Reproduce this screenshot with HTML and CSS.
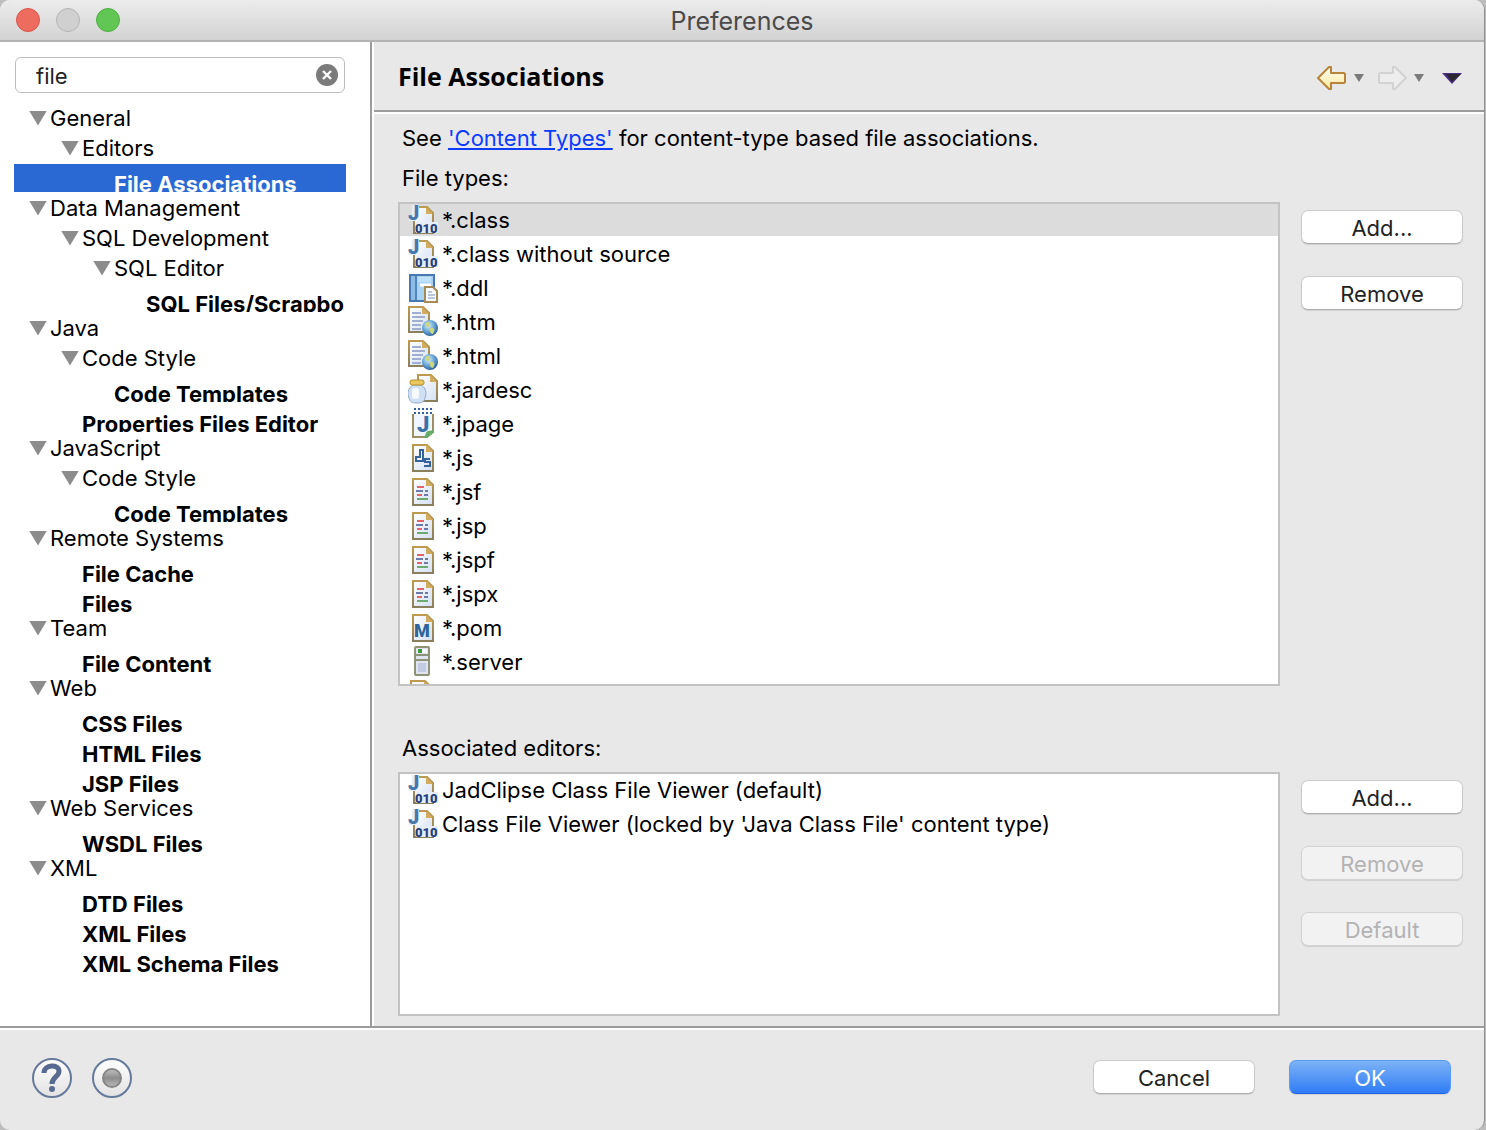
FILE: index.html
```html
<!DOCTYPE html>
<html lang="en">
<head>
<meta charset="utf-8">
<title>Preferences</title>
<link rel="stylesheet" href="styles.css">
</head>
<body>
<svg class="defs" aria-hidden="true">
  <defs>
    <linearGradient id="paper" x1="0" y1="0" x2="1" y2="1"><stop offset="0" stop-color="#fff"/><stop offset="1" stop-color="#d3e0f4"/></linearGradient>
    <linearGradient id="edge" x1="0" y1="0" x2="0" y2="1"><stop offset="0" stop-color="#bd9a50"/><stop offset="1" stop-color="#8a7f5c"/></linearGradient>
    <linearGradient id="gold" x1="0" y1="0" x2="0" y2="1"><stop offset="0" stop-color="#fffef2"/><stop offset="1" stop-color="#fbe9a0"/></linearGradient>
    <radialGradient id="globe" cx=".4" cy=".35" r=".7"><stop offset="0" stop-color="#d9f0fb"/><stop offset=".6" stop-color="#5b9bd0"/><stop offset="1" stop-color="#2c568f"/></radialGradient>
    <linearGradient id="dot" x1="0" y1="0" x2="0" y2="1"><stop offset="0" stop-color="#c4c4c4"/><stop offset=".5" stop-color="#8c8c8c"/><stop offset="1" stop-color="#bdbdbd"/></linearGradient>
    <linearGradient id="round" x1="0" y1="0" x2="0" y2="1"><stop offset="0" stop-color="#fff"/><stop offset="1" stop-color="#e2e2e2"/></linearGradient>
    <symbol id="page" viewBox="0 0 32 32"><path d="M5 3h14l6 6v20H5z" fill="url(#paper)" stroke="url(#edge)" stroke-width="2"/><path d="M18 3v7h7z" fill="#d2ac5e"/></symbol>
    <symbol id="class" viewBox="0 0 32 32">
      <path d="M6 3h13l6 6v20H6z" fill="url(#paper)" stroke="url(#edge)" stroke-width="2"/><path d="M18 3v7h7z" fill="#d2ac5e"/>
      <path d="M4 1h7v13l-3 3H1v-5h3z" fill="#e3edf8"/>
      <text x="0" y="16" class="glyph-j">J</text>
      <path d="M8 18h22v11H8z" fill="#e6edf9"/>
      <text x="7" y="29" class="glyph-bits">010</text>
    </symbol>
    <symbol id="ddl" viewBox="0 0 32 32">
      <path d="M2 3h24v26H2z" fill="#a9d3f5" stroke="#4879ae" stroke-width="2"/><path d="M3 4h4v24H3z" fill="#8dbbe6"/><path d="M8 4v24" stroke="#4f86bd" stroke-width="2"/><path d="M12 13h11" stroke="#fff" stroke-width="3"/><path d="M10 5h13v5H10z" fill="#bfe0fa"/>
      <path d="M17 15h8l4 4v11H17z" fill="#f7faff" stroke="#a58c52" stroke-width="2"/><path d="M20 20h4M20 23h7M20 26h7" stroke="#7b93bd"/>
    </symbol>
    <symbol id="html" viewBox="0 0 32 32">
      <path d="M1 1h14l6 6v19H1z" fill="url(#paper)" stroke="url(#edge)" stroke-width="2"/><path d="M14 1v7h7z" fill="#d2ac5e"/>
      <path d="M4 7h9M4 11h13M4 15h11M4 19h9M4 23h9" stroke="#a0aed0" stroke-width="2"/>
      <circle cx="22" cy="22" r="8" fill="url(#globe)"/><path d="M17 18c3-4 5-2 5 1s-4 2-5 0M22 22c4-1 6 1 3 6-2 0-4-3-3-6" fill="#cbd67e"/>
    </symbol>
    <symbol id="jar" viewBox="0 0 32 32">
      <path d="M10 1h13l6 6v20H10z" fill="url(#paper)" stroke="url(#edge)" stroke-width="2"/><path d="M22 1v7h7z" fill="#d2ac5e"/>
      <path d="M5 11h8c5 3 6 8 4 13-1 4-3 5-8 5s-7-1-8-5c-2-5-1-10 4-13z" fill="#cfdff4" stroke="#93a9ca"/><rect x="4" y="14" width="7" height="11" rx="3" fill="#f6faff"/><rect x="2" y="6" width="14" height="5" rx="2" fill="#e9c95d" stroke="#b58f2e"/>
    </symbol>
    <symbol id="jpage" viewBox="0 0 32 32">
      <path d="M5 3h20v21l-6 5H5z" fill="#f1f7ff" stroke="#9c8f63" stroke-width="2"/><path d="M26 22v2l-7 6h-4c3-2 2-6 5-7z" fill="#67ad68"/>
      <path d="M4 3h22" stroke="#fff" stroke-width="6"/><path d="M6 1h20M6 5h20" stroke="#355f93" stroke-width="2" stroke-dasharray="2 2"/>
      <text x="9" y="24" class="glyph-page">J</text>
    </symbol>
    <symbol id="js" viewBox="0 0 32 32"><use href="#page"/><path d="M12 8h3v11H8v-4h4zM22 17h-5v3h5v4h-6" fill="none" stroke="#35629a" stroke-width="2"/></symbol>
    <symbol id="jsp" viewBox="0 0 32 32"><use href="#page"/>
      <path d="M9 11h7M9 19h5" stroke="#e1646a" stroke-width="2"/><path d="M8 15h7M17 15h3M16 19h4" stroke="#6d7ba8" stroke-width="2"/><path d="M9 23h11" stroke="#6daa72" stroke-width="2"/>
    </symbol>
    <symbol id="pom" viewBox="0 0 32 32"><use href="#page"/><text x="6" y="25" class="glyph-m">M</text></symbol>
    <symbol id="server" viewBox="0 0 32 32">
      <rect x="7" y="1" width="14" height="28" rx="1" fill="#dfe4ee" stroke="#8d9278" stroke-width="2"/><path d="M8 9h12M8 14h12" stroke="#8d9278" stroke-width="2"/><path d="M9 3h10v4H9z" fill="#f4f8fb"/><path d="M10 3h4v4h-4z" fill="#3a9d3a"/><path d="M10 17h8v9h-8z" fill="#c3cbe2"/>
    </symbol>
    <symbol id="sheet" viewBox="0 0 32 32"><path d="M3 1h14l6 6v20H3z" fill="url(#paper)" stroke="url(#edge)" stroke-width="2"/><path d="M16 1v7h7z" fill="#d2ac5e"/></symbol>
  </defs>
</svg>

<div class="window">
  <header class="titlebar">
    <div class="lights">
      <button class="light light-close" aria-label="Close"></button>
      <button class="light light-min" aria-label="Minimize" disabled></button>
      <button class="light light-zoom" aria-label="Zoom"></button>
    </div>
    <h1 class="window-title">Preferences</h1>
  </header>

  <div class="body">
    <nav class="sidebar" aria-label="Preference pages">
      <div class="search">
        <input class="search-input" type="text" value="file" aria-label="Filter">
        <button class="clear" aria-label="Clear">
          <svg width="22" height="22" viewBox="0 0 22 22"><circle cx="11" cy="11" r="11" fill="#7b7b7b"/><path d="M7 7l8 8M15 7l-8 8" stroke="#fff" stroke-width="2.4"/></svg>
        </button>
      </div>
      <ul class="tree" role="tree">
        <li class="node l0" role="treeitem">General</li>
        <li class="node l1" role="treeitem">Editors</li>
        <li class="node leaf l2 selected" role="treeitem" aria-selected="true">File Associations</li>
        <li class="node l0" role="treeitem">Data Management</li>
        <li class="node l1" role="treeitem">SQL Development</li>
        <li class="node l2" role="treeitem">SQL Editor</li>
        <li class="node leaf l3" role="treeitem">SQL Files/Scrapbo</li>
        <li class="node l0" role="treeitem">Java</li>
        <li class="node l1" role="treeitem">Code Style</li>
        <li class="node leaf l2" role="treeitem">Code Templates</li>
        <li class="node leaf l1" role="treeitem">Properties Files Editor</li>
        <li class="node l0" role="treeitem">JavaScript</li>
        <li class="node l1" role="treeitem">Code Style</li>
        <li class="node leaf l2" role="treeitem">Code Templates</li>
        <li class="node l0" role="treeitem">Remote Systems</li>
        <li class="node leaf l1" role="treeitem">File Cache</li>
        <li class="node leaf l1" role="treeitem">Files</li>
        <li class="node l0" role="treeitem">Team</li>
        <li class="node leaf l1" role="treeitem">File Content</li>
        <li class="node l0" role="treeitem">Web</li>
        <li class="node leaf l1" role="treeitem">CSS Files</li>
        <li class="node leaf l1" role="treeitem">HTML Files</li>
        <li class="node leaf l1" role="treeitem">JSP Files</li>
        <li class="node l0" role="treeitem">Web Services</li>
        <li class="node leaf l1" role="treeitem">WSDL Files</li>
        <li class="node l0" role="treeitem">XML</li>
        <li class="node leaf l1" role="treeitem">DTD Files</li>
        <li class="node leaf l1" role="treeitem">XML Files</li>
        <li class="node leaf l1" role="treeitem">XML Schema Files</li>
      </ul>
    </nav>

    <main class="content">
      <div class="page-head">
        <h2 class="page-title">File Associations</h2>
        <div class="history">
          <button class="tool" aria-label="Back"><svg width="30" height="26" viewBox="0 0 30 26"><path d="M1 13L12 2h2v6h13l1 1v8l-1 1H14v6h-2z" fill="url(#gold)" stroke="#b9843a" stroke-width="2" stroke-linejoin="round"/></svg></button>
          <button class="tool" aria-label="Back history"><svg width="10" height="8" viewBox="0 0 10 8"><path d="M0 0h10L5 8z" fill="#7b7b7b"/></svg></button>
          <button class="tool forward" aria-label="Forward"><svg width="30" height="26" viewBox="0 0 30 26"><path d="M29 13L18 2h-2v6H3L2 9v8l1 1h13v6h2z" fill="#ededed" stroke="#d2d2d2" stroke-width="2" stroke-linejoin="round"/></svg></button>
          <button class="tool" aria-label="Forward history"><svg width="10" height="8" viewBox="0 0 10 8"><path d="M0 0h10L5 8z" fill="#7b7b7b"/></svg></button>
          <button class="tool menu" aria-label="View menu"><svg width="20" height="11" viewBox="0 0 20 11"><path d="M0 0h20L10 11z" fill="#4b2d86"/><path d="M4 1h15l-9 8z" fill="#2b2730"/></svg></button>
        </div>
      </div>

      <div class="page-body">
        <p class="line">See <a class="link" href="#content-types">'Content Types'</a> for content-type based file associations.</p>
        <div class="line" id="types-label">File types:</div>
        <div class="panel panel-types">
          <ul class="list" role="listbox" aria-labelledby="types-label">
            <li class="item current" role="option" aria-selected="true"><svg class="icon"><use href="#class"/></svg>*.class</li>
            <li class="item" role="option"><svg class="icon"><use href="#class"/></svg>*.class without source</li>
            <li class="item" role="option"><svg class="icon"><use href="#ddl"/></svg>*.ddl</li>
            <li class="item" role="option"><svg class="icon"><use href="#html"/></svg>*.htm</li>
            <li class="item" role="option"><svg class="icon"><use href="#html"/></svg>*.html</li>
            <li class="item" role="option"><svg class="icon"><use href="#jar"/></svg>*.jardesc</li>
            <li class="item" role="option"><svg class="icon"><use href="#jpage"/></svg>*.jpage</li>
            <li class="item" role="option"><svg class="icon"><use href="#js"/></svg>*.js</li>
            <li class="item" role="option"><svg class="icon"><use href="#jsp"/></svg>*.jsf</li>
            <li class="item" role="option"><svg class="icon"><use href="#jsp"/></svg>*.jsp</li>
            <li class="item" role="option"><svg class="icon"><use href="#jsp"/></svg>*.jspf</li>
            <li class="item" role="option"><svg class="icon"><use href="#jsp"/></svg>*.jspx</li>
            <li class="item" role="option"><svg class="icon"><use href="#pom"/></svg>*.pom</li>
            <li class="item" role="option"><svg class="icon"><use href="#server"/></svg>*.server</li>
            <li class="item" role="option"><svg class="icon"><use href="#sheet"/></svg></li>
          </ul>
          <div class="actions">
            <button class="btn">Add...</button>
            <button class="btn">Remove</button>
          </div>
        </div>
        <div class="line line-editors" id="editors-label">Associated editors:</div>
        <div class="panel panel-editors">
          <ul class="list" role="listbox" aria-labelledby="editors-label">
            <li class="item" role="option"><svg class="icon"><use href="#class"/></svg>JadClipse Class File Viewer (default)</li>
            <li class="item" role="option"><svg class="icon"><use href="#class"/></svg>Class File Viewer (locked by 'Java Class File' content type)</li>
          </ul>
          <div class="actions">
            <button class="btn">Add...</button>
            <button class="btn" disabled>Remove</button>
            <button class="btn" disabled>Default</button>
          </div>
        </div>
      </div>
    </main>
  </div>

  <footer class="footer">
    <button class="tool" aria-label="Help"><svg width="40" height="40" viewBox="0 0 40 40"><circle cx="20" cy="20" r="19" fill="url(#round)" stroke="#66799b" stroke-width="2"/><path d="M12 15c0-9 15-9 15-2 0 6-7 6-7 13" fill="none" stroke="#586a90" stroke-width="5"/><circle cx="20" cy="31" r="3" fill="#586a90"/></svg></button>
    <button class="tool" aria-label="Record"><svg width="40" height="40" viewBox="0 0 40 40"><circle cx="20" cy="20" r="19" fill="url(#round)" stroke="#66799b" stroke-width="2"/><circle cx="20" cy="20" r="9" fill="url(#dot)" stroke="#858585" stroke-width="2"/></svg></button>
    <div class="decide">
      <button class="btn">Cancel</button>
      <button class="btn btn-primary">OK</button>
    </div>
  </footer>
</div>
</body>
</html>
```
FILE: styles.css
```css
* { box-sizing: border-box; }
body {
  margin: 0;
  background: #bdbdbd;
  color: #000;
  font: 22px/32px Inter, "Liberation Sans", sans-serif;
}
ul, h1, h2, p { margin: 0; padding: 0; list-style: none; }
button { font: inherit; margin: 0; padding: 0; border: 0; background: none; }
.defs { position: absolute; width: 0; height: 0; }

.window {
  display: flex;
  flex-direction: column;
  min-height: 100vh;
  margin-right: 1px;
  border-right: 1px solid #8f8f8f;
  border-radius: 10px;
  background: #e8e8e8;
  overflow: hidden;
}

.titlebar {
  display: grid;
  grid-template-columns: 1fr auto 1fr;
  align-items: center;
  height: 42px;
  padding: 0 16px;
  background: linear-gradient(#ececec, #d2d2d2);
  border-bottom: 2px solid #b3b3b3;
}
.lights { display: flex; gap: 16px; }
.light { width: 24px; height: 24px; border: 1px solid; border-radius: 50%; }
.light-close { background: #ed6b5f; border-color: #d9564b; }
.light-min { background: #d0d0d0; border-color: #b4b4b4; }
.light-zoom { background: #62c655; border-color: #4fae42; }
.window-title { padding-top: 2px; font-size: 25px; font-weight: 400; line-height: 38px; color: #4a4a4a; }

.body { display: flex; flex: 1; border-bottom: 2px solid #9b9b9b; }

.sidebar {
  flex: none;
  width: 372px;
  padding: 15px 24px 15px 14px;
  background: #fff;
  border-right: 2px solid #9b9b9b;
}
.search {
  display: flex;
  align-items: center;
  height: 36px;
  margin: 0 1px 11px;
  padding: 0 6px 0 20px;
  border: 1px solid #bcbcbc;
  border-radius: 6px;
}
.search-input {
  flex: 1;
  min-width: 0;
  padding: 2px 0 0;
  border: 0;
  outline: 0;
  background: none;
  color: #222;
  font: inherit;
}
.clear { display: flex; }

.tree { display: grid; row-gap: 2px; }
.node {
  display: flex;
  align-items: center;
  height: 28px;
  line-height: 28px;
  overflow: hidden;
  white-space: nowrap;
}
.node::before {
  content: "";
  flex: none;
  width: 18px;
  height: 15px;
  margin-right: 3px;
  background: #8c8c8c;
  clip-path: polygon(0 0, 100% 0, 50% 100%);
}
.l0 { padding-left: 15px; }
.l1 { padding-left: 47px; }
.l2 { padding-left: 79px; }
.l3 { padding-left: 111px; }
.leaf { padding-top: 12px; font-weight: 700; }
.leaf::before { visibility: hidden; }
.selected { background: #2a69d4; color: #fff; }

.content {
  display: flex;
  flex: 1;
  flex-direction: column;
  min-width: 0;
  border-left: 2px solid #fff;
}
.page-head {
  display: flex;
  align-items: center;
  justify-content: space-between;
  height: 70px;
  padding: 0 22px 0 24px;
  border-bottom: 2px solid #9b9b9b;
}
.page-title { font: 700 25px/32px "Open Sans", sans-serif; }
.history { display: flex; align-items: center; gap: 7px; padding-top: 4px; }
.tool { display: flex; }
.forward { margin-left: 6px; }
.menu { margin-left: 11px; }

.page-body {
  display: flex;
  flex: 1;
  flex-direction: column;
  gap: 8px;
  padding: 8px 21px 10px 24px;
  border-top: 2px solid #fff;
}
.line { padding-left: 4px; }
.line-editors { margin-top: 38px; }
.link { color: #0b3cff; }
.panel {
  display: grid;
  grid-template-columns: 1fr 162px;
  column-gap: 21px;
  min-height: 0;
}
.panel-types { flex: 484 1 0; }
.panel-editors { flex: 244 1 0; }
.list {
  contain: size;
  overflow: hidden;
  border: 2px solid #c3c3c3;
  background: #fff;
}
.item {
  display: flex;
  gap: 2px;
  height: 32px;
  margin-bottom: 2px;
  padding-left: 8px;
  white-space: nowrap;
}
.current { background: #dcdcdc; }
.icon { flex: none; width: 32px; height: 32px; }
.glyph-j { font: 900 20px Roboto, sans-serif; fill: #4777ab; }
.glyph-bits { font: 900 13px Roboto, sans-serif; fill: #263f78; }
.glyph-page { font: 900 22px Roboto, sans-serif; fill: #3b70a8; }
.glyph-m { font: 900 18px Roboto, sans-serif; fill: #2f659c; }

.actions { display: flex; flex-direction: column; gap: 32px; padding-top: 8px; }
.btn {
  width: 162px;
  height: 34px;
  padding-top: 1px;
  border: 1px solid #cbcbcb;
  border-bottom-color: #adadad;
  border-radius: 7px;
  background: #fff;
  box-shadow: 0 1px 1px #d0d0d0;
  color: #222;
}
.btn:disabled { background: #f2f2f2; border-color: #d3d3d3; color: #b3b3b3; }
.btn-primary {
  background: linear-gradient(#7db3f5, #2f7cf6);
  border-color: #5b9cf3;
  border-bottom-color: #2062ec;
  color: #fff;
}

.footer {
  display: flex;
  align-items: center;
  gap: 20px;
  height: 102px;
  padding: 0 33px 4px 32px;
  border-top: 2px solid #fff;
}
.decide { display: flex; gap: 34px; margin-left: auto; padding-bottom: 2px; }
```
